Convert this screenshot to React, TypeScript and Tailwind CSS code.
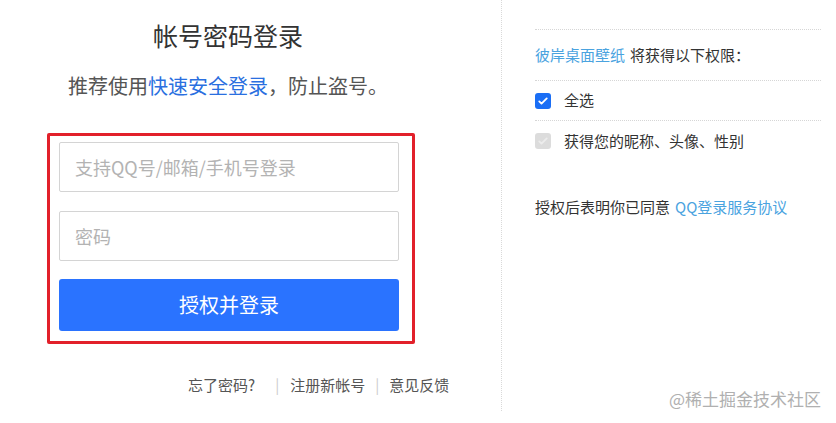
import React from "react"

const font = { fontFamily: '"Microsoft YaHei", "Noto Sans CJK SC", "Noto Sans", sans-serif' }

function CheckBox({ checked, disabled }: { checked?: boolean; disabled?: boolean }) {
  return (
    <span
      className={`flex h-4 w-4 shrink-0 items-center justify-center rounded-[3px] ${
        disabled ? "bg-[#dcdcdc]" : "bg-[#1a6ef5]"
      }`}
    >
      <svg viewBox="0 0 16 16" className="h-3 w-3" fill="none">
        <path
          d="M3 8.5l3 3 7-7"
          stroke={disabled ? "#ececec" : "#fff"}
          strokeWidth="2.4"
          strokeLinecap="round"
          strokeLinejoin="round"
        />
      </svg>
    </span>
  )
}

function LoginForm() {
  return (
    <div className="flex h-[411px] w-[502px] shrink-0 flex-col border-r border-dotted border-[#d9d9d9] pl-[47px]">
      <h1 className="pl-[106px] pt-[19px] text-[25px] leading-[32px] font-normal text-[#333]">
        帐号密码登录
      </h1>
      <p className="mt-[21px] pl-[21px] text-[20px] leading-[28px] text-[#555]">
        推荐使用<span className="text-[#2a6fe0]">快速安全登录</span>，防止盗号。
      </p>

      <div className="mt-[33px] flex w-[368px] flex-col gap-[19px] rounded-[2px] border-[3px] border-[#e2202a] pl-[9px] pr-[13px] pt-[6px] pb-[10px]">
        <input
          placeholder="支持QQ号/邮箱/手机号登录"
          className="h-[50px] w-full rounded-[2px] border border-[#d4d4d4] px-[15px] text-[18px] text-[#333] outline-none placeholder:text-[#b3b3b3]"
          style={font}
        />
        <input
          type="password"
          placeholder="密码"
          className="h-[50px] w-full rounded-[2px] border border-[#d4d4d4] px-[15px] text-[18px] text-[#333] outline-none placeholder:text-[#b3b3b3]"
          style={font}
        />
        <button
          type="button"
          className="-mt-[1px] h-[52px] w-full rounded-[3px] bg-[#2a73ff] text-[20px] text-white"
          style={font}
        >
          授权并登录
        </button>
      </div>

      <div className="mt-[31px] flex items-center pl-[141px] text-[15px] leading-[20px] text-[#555]">
        <a>忘了密码?</a>
        <span className="ml-[20px] mr-[11px] text-[#ccc]">|</span>
        <a>注册新帐号</a>
        <span className="mx-[10px] text-[#ccc]">|</span>
        <a>意见反馈</a>
      </div>
    </div>
  )
}

function Permissions() {
  return (
    <div className="flex flex-1 flex-col pl-[33px] pr-[15px] pt-[29px] text-[15px] text-[#333]">
      <div className="border-t border-dotted border-[#d6d6d6]" />
      <div className="flex h-[50px] items-center">
        <span className="text-[#4aa3df]">彼岸桌面壁纸</span>
        <span className="ml-[5px]">将获得以下权限：</span>
      </div>
      <div className="border-t border-dotted border-[#d6d6d6]" />
      <div className="flex h-[39px] items-center gap-[13px]">
        <CheckBox checked />
        <span>全选</span>
      </div>
      <div className="border-t border-dotted border-[#d6d6d6]" />
      <div className="flex h-[40px] items-center gap-[13px]">
        <CheckBox checked disabled />
        <span>获得您的昵称、头像、性别</span>
      </div>
      <div className="mt-[35px] flex items-center">
        <span>授权后表明你已同意</span>
        <span className="ml-[5px] text-[#4aa3df]">QQ登录服务协议</span>
      </div>
    </div>
  )
}

export default function App() {
  return (
    <div className="relative flex h-[423px] w-[836px] overflow-hidden bg-white" style={font}>
      <LoginForm />
      <Permissions />
      <div className="absolute right-[15px] bottom-[12px] text-[17px] text-[#b0b0b0]">
        @稀土掘金技术社区
      </div>
    </div>
  )
}
